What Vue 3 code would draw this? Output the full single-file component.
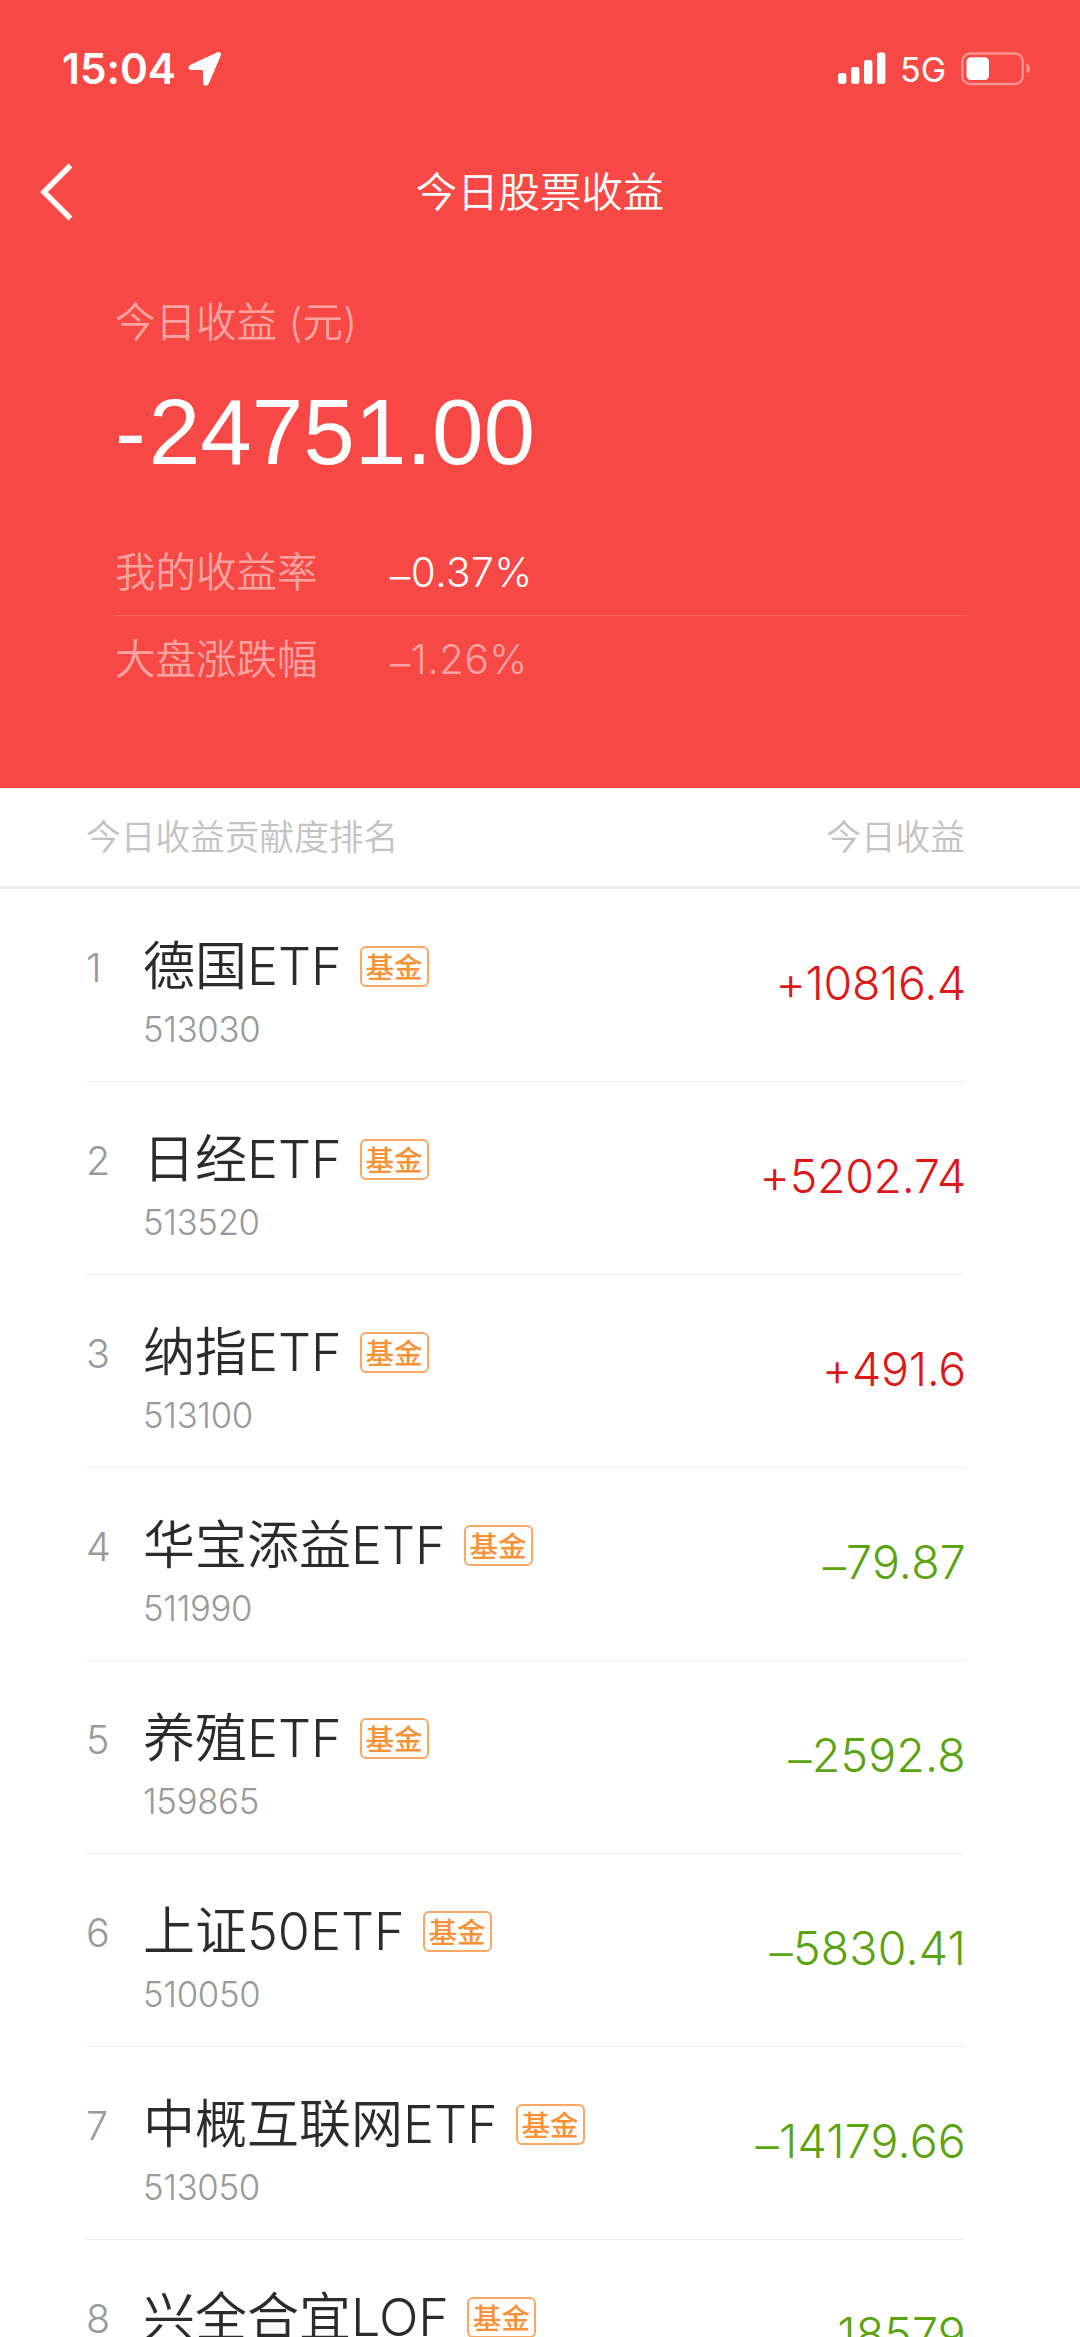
<template>
    <div class="page">
        <div class="top">
            <div class="status-bar">
                <div class="clock">15:04</div>
                <svg class="location" width="34" height="36" viewBox="0 0 34 36">
                    <path d="M29.5 1.2 3 13.4C-.8 15.2.2 19 3.6 19H14.2Q15 19 15 19.8V31.2C15 35.2 19.3 35.8 20.8 32.5L32.6 5C33.8 2 32 .1 29.5 1.2Z" fill="#fff" />
                </svg>
                <svg class="signal" width="48" height="34" viewBox="0 0 48 34">
                    <rect x="0" y="21" width="8.4" height="11" rx="2.4" fill="#fff" />
                    <rect x="13" y="15" width="8.4" height="17" rx="2.4" fill="#fff" />
                    <rect x="26" y="8" width="8.4" height="24" rx="2.4" fill="#fff" />
                    <rect x="39" y="0.5" width="8.4" height="31.5" rx="2.4" fill="#fff" />
                </svg>
                <div class="network">5G</div>
                <svg class="battery" width="70" height="34" viewBox="0 0 70 34">
                    <rect x="1.3" y="1.5" width="60.5" height="30.5" rx="8" fill="none" stroke="#fff" stroke-opacity="0.4" stroke-width="2.4" />
                    <rect x="5.5" y="5.3" width="22.5" height="22.7" rx="4.5" fill="#fff" />
                    <path d="M65.5 11.5C70.3 13.5 70.3 19.5 65.5 21.5Z" fill="#fff" fill-opacity="0.45" />
                </svg>
            </div>
            <div class="nav">
                <svg class="back" width="36" height="60" viewBox="0 0 36 60">
                    <path d="M31.5 4.5 5 31 31.5 57.5" fill="none" stroke="#fff" stroke-width="5.4" />
                </svg>
                <div class="title">今日股票收益</div>
            </div>
            <div class="summary">
                <div class="label">今日收益 (元)</div>
                <div class="total"><span class="total-sign">-</span>24751.00</div>
                <div class="rate mine">
                    <span class="rate-name">我的收益率</span>
                    <span class="rate-value"><span class="dash">–</span>0.37%</span>
                </div>
                <div class="rate market">
                    <span class="rate-name">大盘涨跌幅</span>
                    <span class="rate-value"><span class="dash">–</span>1.26%</span>
                </div>
            </div>
        </div>
        <div class="list-head">
            <span>今日收益贡献度排名</span>
            <span>今日收益</span>
        </div>
        <div class="list">
            <div class="row" v-for="(fund, index) in funds" :key="fund.name">
                <div class="index">{{ index + 1 }}</div>
                <div class="info">
                    <div class="name-line">
                        <span class="name">{{ fund.name }}</span>
                        <span class="tag">基金</span>
                    </div>
                    <div class="code">{{ fund.code }}</div>
                </div>
                <div v-if="fund.amount > 0" class="amount up">+{{ fund.amount }}</div>
                <div v-else class="amount"><span class="dash">–</span>{{ -fund.amount }}</div>
            </div>
        </div>
    </div>
</template>

<script setup>
import { ref } from 'vue';

const funds = ref([
    { name: '德国ETF', code: '513030', amount: 10816.4 },
    { name: '日经ETF', code: '513520', amount: 5202.74 },
    { name: '纳指ETF', code: '513100', amount: 491.6 },
    { name: '华宝添益ETF', code: '511990', amount: -79.87 },
    { name: '养殖ETF', code: '159865', amount: -2592.8 },
    { name: '上证50ETF', code: '510050', amount: -5830.41 },
    { name: '中概互联网ETF', code: '513050', amount: -14179.66 },
    { name: '兴全合宜LOF', code: '', amount: -18579 }
]);

</script>

<style>
body {
    margin: 0;
}
</style>

<style scoped>
.page {
    width: 1080px;
    height: 2337px;
    overflow: hidden;
    background-color: #fefefe;
    font-family: Inter, "Noto Sans CJK SC DemiLight", "Noto Sans CJK SC", sans-serif;
    font-weight: 350;
    font-feature-settings: "calt" 0;
    white-space: nowrap;
}

.top {
    height: 788px;
    background-color: #f64945;
    color: white;
}

.status-bar {
    height: 138px;
    box-sizing: border-box;
    padding: 38px 49px 39px 62px;
    display: flex;
    align-items: center;
}

.clock {
    width: 126px;
    font-size: 42.3px;
    font-weight: 600;
    line-height: 60px;
}

.location {
    margin-top: 1px;
}

.signal {
    margin-left: auto;
}

.network {
    width: 60px;
    margin-left: 14px;
    padding-top: 2px;
    font-size: 34px;
    font-weight: 400;
    line-height: 60px;
}

.battery {
    margin-left: 1px;
}

.nav {
    height: 108px;
    display: grid;
    grid-template-columns: 120px 1fr 120px;
    align-items: center;
}

.back {
    margin: -2px 0 0 39px;
}

.title {
    font-size: 41.4px;
    line-height: 60px;
    text-align: center;
}

.summary {
    padding: 47px 115px 0;
}

.label {
    font-size: 40.5px;
    line-height: 60px;
    color: #fba3a1;
}

.total {
    height: 110px;
    margin: 24px 0 36px;
    font-family: "Liberation Sans", sans-serif;
    font-size: 92.6px;
    font-weight: 400;
    line-height: 110px;
}

.total-sign {
    letter-spacing: 3px;
}

.rate {
    display: flex;
    font-size: 40.5px;
    line-height: 88px;
}

.mine {
    padding-top: 8px;
    line-height: 84px;
    border-bottom: 1px solid #fa6865;
}

.rate-name {
    width: 275px;
    color: #fba3a1;
}

.rate-value {
    letter-spacing: 0.5px;
}

.market {
    color: #fba3a1;
}

/* the dash sits a little lower than the font puts it */
.dash {
    line-height: 0;
    vertical-align: -0.09em;
}

.list-head {
    height: 101.4px;
    box-sizing: border-box;
    padding: 0 115px 0 86px;
    border-bottom: 3px solid #efefef;
    display: flex;
    justify-content: space-between;
    font-size: 34.7px;
    line-height: 98px;
    color: #c3c3c3;
}

.list {
    padding: 0 115px 0 86px;
}

.row {
    height: 193px;
    box-sizing: border-box;
    border-bottom: 1px solid #eeeeee;
    display: flex;
}

.index {
    width: 57px;
    padding-top: 48.5px;
    font-size: 39.5px;
    line-height: 60px;
    color: #999999;
}

.info {
    flex: 1;
    padding-top: 47.5px;
}

.name-line {
    display: flex;
    align-items: center;
}

.name {
    font-size: 52px;
    line-height: 60px;
    color: #2b2b2b;
}

.tag {
    width: 69px;
    height: 41px;
    box-sizing: border-box;
    margin-left: 18px;
    border: 2px solid #f8a862;
    border-radius: 6px;
    font-family: "Noto Sans CJK SC", sans-serif;
    font-size: 28.6px;
    font-weight: 500;
    line-height: 35px;
    text-align: center;
    color: #f79238;
}

.code {
    margin-top: 10px;
    font-size: 34.7px;
    line-height: 44px;
    letter-spacing: -0.3px;
    color: #999999;
}

.amount {
    margin-right: -1px;
    padding-top: 63.5px;
    font-size: 46.5px;
    line-height: 60px;
    letter-spacing: 0.2px;
    color: #5ba30f;
}

.up {
    letter-spacing: -0.3px;
    color: #dc1818;
}
</style>
